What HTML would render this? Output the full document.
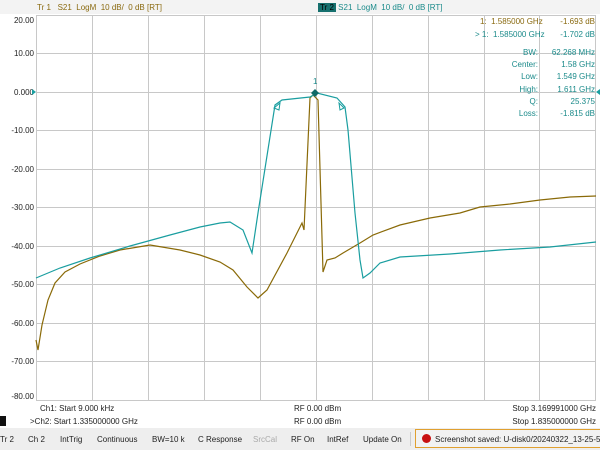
<!DOCTYPE html>
<html><head><style>
body{margin:0;width:600px;height:450px;overflow:hidden;background:#fff;font-family:"Liberation Sans",sans-serif;position:relative}
.t{position:absolute;font-size:8px;white-space:nowrap}
.yl{position:absolute;font-size:8px;right:566px;color:#222}
</style></head><body>
<div style="position:absolute;left:0;top:0;width:600px;height:14px;background:#f3f3f3"></div>
<div class="t" style="left:37px;top:3px;color:#8a6a10">Tr 1 &nbsp; S21 &nbsp;LogM &nbsp;10 dB/ &nbsp;0 dB [RT]</div>
<div class="t" style="left:318px;top:3px;color:#1a8a8a"><span style="background:#16706e;color:#000;padding:0 2px">Tr 2</span> S21 &nbsp;LogM &nbsp;10 dB/ &nbsp;0 dB [RT]</div>
<div class="yl" style="top:16px">20.00</div>
<div class="yl" style="top:49px">10.00</div>
<div class="yl" style="top:88px">0.000</div>
<div class="yl" style="top:126px">-10.00</div>
<div class="yl" style="top:165px">-20.00</div>
<div class="yl" style="top:203px">-30.00</div>
<div class="yl" style="top:242px">-40.00</div>
<div class="yl" style="top:280px">-50.00</div>
<div class="yl" style="top:319px">-60.00</div>
<div class="yl" style="top:357px">-70.00</div>
<div class="yl" style="top:392px">-80.00</div>
<svg style="position:absolute;left:0;top:0" width="600" height="450">
<g stroke="#c8c8c8" stroke-width="1" fill="none">
<rect x="36.5" y="15.5" width="559" height="385"/>
<path d="M92.5 15V400M148.5 15V400M204.5 15V400M260.5 15V400M316.5 15V400M372.5 15V400M428.5 15V400M484.5 15V400M539.5 15V400M36 53.5H596M36 92.5H596M36 130.5H596M36 169.5H596M36 207.5H596M36 246.5H596M36 284.5H596M36 323.5H596M36 361.5H596"/>
</g>
<polyline fill="none" stroke="#8a6a08" stroke-width="1.2" points="36,340 38,350 42,325 48,300 55,283 65,272 80,264 100,256 120,250 150,245 180,250 200,255 220,262 233,270 247,287 258,298 267,290 287,253 302,223 304,230 310,98 313,95 318,100 323,272 327,260 335,258 343,253 360,243 373,235 400,225 430,218 460,213 480,207 510,204 540,200 570,197 596,196"/>
<polyline fill="none" stroke="#1a9ea0" stroke-width="1.2" points="36,278 60,268 90,258 130,246 170,235 200,227 220,223 230,222 243,230 252,253 258,213 275,105 282,100 310,97 317,93 337,98 345,107 348,130 355,213 360,260 363,278 370,273 380,263 400,257 450,254 500,250 550,247 596,242"/>
<polygon points="311,93 315,89 319,93 315,97" fill="#106a68"/>
<polygon points="274,108 280,103 279,110" fill="none" stroke="#1a9ea0"/>
<polygon points="344,108 339,103 340,110" fill="none" stroke="#1a9ea0"/>
<polygon points="32,89 36,92 32,95" fill="#1a9ea0"/>
<polygon points="600,89 596,92 600,95" fill="#1a9ea0"/>
</svg>
<div class="t" style="left:313px;top:77px;color:#1a8a8a">1</div>
<div class="t" style="left:480px;top:17px;color:#8a6a10">1: &nbsp;1.585000 GHz</div>
<div class="t" style="right:5px;top:17px;color:#8a6a10">-1.693 dB</div>
<div class="t" style="left:475px;top:30px;color:#1a8a8a">&gt; 1: &nbsp;1.585000 GHz</div>
<div class="t" style="right:5px;top:30px;color:#1a8a8a">-1.702 dB</div>
<div class="t" style="right:62px;top:47px;color:#1a8a8a;text-align:right;line-height:12.2px">BW:<br>Center:<br>Low:<br>High:<br>Q:<br>Loss:</div>
<div class="t" style="right:5px;top:47px;color:#1a8a8a;text-align:right;line-height:12.2px">62.268 MHz<br>1.58 GHz<br>1.549 GHz<br>1.611 GHz<br>25.375<br>-1.815 dB</div>
<div class="t" style="left:40px;top:404px;color:#222">Ch1: Start 9.000 kHz</div>
<div class="t" style="left:294px;top:404px;color:#222">RF 0.00 dBm</div>
<div class="t" style="right:4px;top:404px;color:#222">Stop 3.169991000 GHz</div>
<div style="position:absolute;left:0;top:416px;width:6px;height:10px;background:#111"></div>
<div class="t" style="left:30px;top:417px;color:#222">&gt;Ch2: Start 1.335000000 GHz</div>
<div class="t" style="left:294px;top:417px;color:#222">RF 0.00 dBm</div>
<div class="t" style="right:4px;top:417px;color:#222">Stop 1.835000000 GHz</div>
<div style="position:absolute;left:0;top:428px;width:600px;height:22px;background:#eeeeee"></div>
<div class="t" style="top:435px;left:0;color:#222">Tr 2</div>
<div class="t" style="top:435px;left:28px;color:#222">Ch 2</div>
<div class="t" style="top:435px;left:60px;color:#222">IntTrig</div>
<div class="t" style="top:435px;left:97px;color:#222">Continuous</div>
<div class="t" style="top:435px;left:152px;color:#222">BW=10 k</div>
<div class="t" style="top:435px;left:198px;color:#222">C Response</div>
<div class="t" style="top:435px;left:253px;color:#aaa">SrcCal</div>
<div class="t" style="top:435px;left:291px;color:#222">RF On</div>
<div class="t" style="top:435px;left:327px;color:#222">IntRef</div>
<div class="t" style="top:435px;left:363px;color:#222">Update On</div>
<div style="position:absolute;left:410px;top:432px;width:1px;height:14px;background:#ccc"></div>
<div style="position:absolute;left:415px;top:429px;width:187px;height:19px;border:1px solid #e0a030;box-sizing:border-box;background:#f2f2f2"></div>
<div style="position:absolute;left:422px;top:434px;width:9px;height:9px;border-radius:50%;background:#c81010"></div>
<div class="t" style="top:435px;left:435px;color:#222">Screenshot saved: U-disk0/20240322_13-25-59.pm</div>
</body></html>
